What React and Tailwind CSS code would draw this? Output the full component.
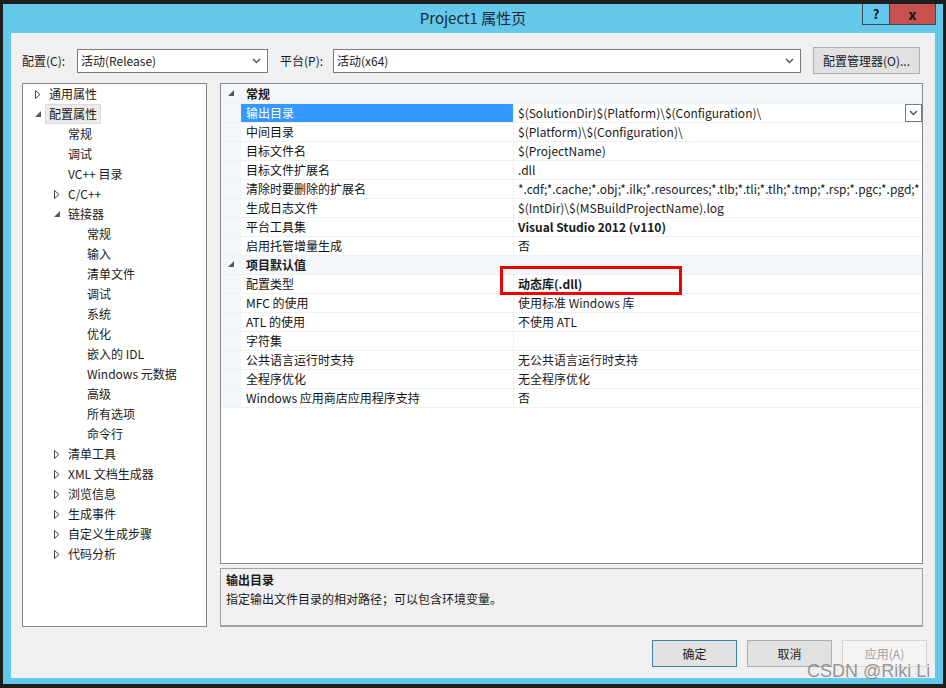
import React from "react";

const Chevron = () => (
  <svg width="9" height="6" viewBox="0 0 9 6">
    <path d="M1 1 L4.5 4.5 L8 1" fill="none" stroke="#555" strokeWidth="1.5" />
  </svg>
);

const Collapsed = () => (
  <svg width="6" height="9" viewBox="0 0 6 9">
    <path d="M0.5 0.5 L5 4.5 L0.5 8.5 Z" fill="none" stroke="#444" />
  </svg>
);

const Expanded = () => (
  <svg width="6" height="6" viewBox="0 0 6 6">
    <path d="M6 0 L6 6 L0 6 Z" fill="#595959" />
  </svg>
);

const indent = {
  0: "pl-[12px]",
  1: "pl-[31px]",
  2: "pl-[50px]",
};

const tree = [
  { label: "通用属性", level: 0, state: "c" },
  { label: "配置属性", level: 0, state: "e", selected: true },
  { label: "常规", level: 1 },
  { label: "调试", level: 1 },
  { label: "VC++ 目录", level: 1 },
  { label: "C/C++", level: 1, state: "c" },
  { label: "链接器", level: 1, state: "e" },
  { label: "常规", level: 2 },
  { label: "输入", level: 2 },
  { label: "清单文件", level: 2 },
  { label: "调试", level: 2 },
  { label: "系统", level: 2 },
  { label: "优化", level: 2 },
  { label: "嵌入的 IDL", level: 2 },
  { label: "Windows 元数据", level: 2 },
  { label: "高级", level: 2 },
  { label: "所有选项", level: 2 },
  { label: "命令行", level: 2 },
  { label: "清单工具", level: 1, state: "c" },
  { label: "XML 文档生成器", level: 1, state: "c" },
  { label: "浏览信息", level: 1, state: "c" },
  { label: "生成事件", level: 1, state: "c" },
  { label: "自定义生成步骤", level: 1, state: "c" },
  { label: "代码分析", level: 1, state: "c" },
];

const props = [
  { cat: "常规" },
  { name: "输出目录", value: "$(SolutionDir)$(Platform)\\$(Configuration)\\", selected: true },
  { name: "中间目录", value: "$(Platform)\\$(Configuration)\\" },
  { name: "目标文件名", value: "$(ProjectName)" },
  { name: "目标文件扩展名", value: ".dll" },
  {
    name: "清除时要删除的扩展名",
    value: "*.cdf;*.cache;*.obj;*.ilk;*.resources;*.tlb;*.tli;*.tlh;*.tmp;*.rsp;*.pgc;*.pgd;*",
  },
  { name: "生成日志文件", value: "$(IntDir)\\$(MSBuildProjectName).log" },
  { name: "平台工具集", value: "Visual Studio 2012 (v110)", bold: true },
  { name: "启用托管增量生成", value: "否" },
  { cat: "项目默认值" },
  { name: "配置类型", value: "动态库(.dll)", bold: true },
  { name: "MFC 的使用", value: "使用标准 Windows 库" },
  { name: "ATL 的使用", value: "不使用 ATL" },
  { name: "字符集", value: "" },
  { name: "公共语言运行时支持", value: "无公共语言运行时支持" },
  { name: "全程序优化", value: "无全程序优化" },
  { name: "Windows 应用商店应用程序支持", value: "否" },
];

const App = () => {
  return (
    <div className="relative w-[946px] h-[688px] overflow-hidden bg-[#1e1e1e] font-['Noto_Sans_CJK_SC','Noto_Sans',sans-serif] text-[12px] text-[#1a1a1a]">
      {/* dialog window */}
      <div className="ml-[3px] mt-[4px] w-[940px] h-[680px] bg-[#64c8ea] flex flex-col px-[8px] pb-[6px]">
        {/* title bar */}
        <div className="relative h-[29px] flex items-center justify-center">
          <span className="text-[15px] text-[#1c2a33]">Project1 属性页</span>
          <div className="absolute top-0 right-[-1px] flex">
            <div className="w-[28px] h-[21px] border border-t-0 border-[#3a4a52] flex items-center justify-center font-bold text-[13px] text-[#111]">
              ?
            </div>
            <div className="w-[46px] h-[21px] border border-l-0 border-t-0 border-[#3a4a52] bg-[#c75050] flex items-center justify-center font-bold text-[14px] text-[#111]">
              x
            </div>
          </div>
        </div>

        {/* client area */}
        <div className="flex-1 bg-[#f0f0f0] flex flex-col pl-[11px] pr-[8px] pt-[14px]">
          {/* config row */}
          <div className="flex items-center h-[27px]">
            <span className="w-[55px]">配置(C):</span>
            <div className="w-[191px] h-[24px] bg-white border border-[#7a7a7a] flex items-center justify-between pl-[3px] pr-[6px]">
              <span>活动(Release)</span>
              <Chevron />
            </div>
            <span className="ml-[12px] w-[53px]">平台(P):</span>
            <div className="w-[468px] h-[24px] bg-white border border-[#7a7a7a] flex items-center justify-between pl-[3px] pr-[6px]">
              <span>活动(x64)</span>
              <Chevron />
            </div>
            <div className="ml-[12px] w-[107px] h-[27px] bg-[#e1e1e1] border border-[#adadad] flex items-center justify-center">
              配置管理器(O)...
            </div>
          </div>

          {/* panels */}
          <div className="mt-[9px] flex h-[544px]">
            {/* tree */}
            <div className="w-[185px] h-full bg-white border border-[#828790]">
              {tree.map((t, i) => (
                <div key={i} className={`flex items-center h-[20px] ${indent[t.level]}`}>
                  <div className="w-[14px] flex items-center">
                    {t.state === "c" && <Collapsed />}
                    {t.state === "e" && <Expanded />}
                  </div>
                  {t.selected ? (
                    <span className="-ml-[4px] px-[3px] leading-[18px] bg-[#ececec] border border-[#dadada]">{t.label}</span>
                  ) : (
                    <span className="whitespace-nowrap">{t.label}</span>
                  )}
                </div>
              ))}
            </div>

            {/* right column */}
            <div className="ml-[13px] w-[703px] flex flex-col">
              <div className="relative h-[481px] bg-white border border-[#828790] pt-px overflow-hidden">
                {props.map((p, i) =>
                  p.cat ? (
                    <div key={i} className="flex items-center h-[19px] bg-[#f3f6fa] border-b border-[#f0f0f0]">
                      <div className="w-[20px] flex items-center justify-center pb-[3px]">
                        <Expanded />
                      </div>
                      <span className="pl-[5px] font-bold">{p.cat}</span>
                    </div>
                  ) : (
                    <div key={i} className="flex h-[19px] border-b border-[#f0f0f0]">
                      <div className="w-[20px] bg-[#f3f6fa]" />
                      <div
                        className={`w-[273px] pl-[5px] flex items-center whitespace-nowrap border-r border-[#f0f0f0] ${
                          p.selected ? "bg-[#3399ff] text-white" : "text-[#111]"
                        }`}
                      >
                        {p.name}
                      </div>
                      <div className="flex-1 min-w-0 pl-[4px] flex items-center justify-between overflow-hidden">
                        <span className={`whitespace-nowrap ${p.bold ? "font-bold" : ""}`}>{p.value}</span>
                        {p.selected && (
                          <div className="shrink-0 w-[17px] h-[18px] bg-white border border-[#7a7a7a] flex items-center justify-center">
                            <Chevron />
                          </div>
                        )}
                      </div>
                    </div>
                  )
                )}
                {/* annotation box */}
                <div className="absolute left-[279px] top-[182px] w-[182px] h-[29px] border-[3px] border-[#f00000]" />
              </div>

              <div className="mt-[4px] h-[59px] bg-[#f0f0f0] border border-[#a0a0a0] border-b-2 pl-[5px] pt-px leading-[19px]">
                <div className="font-bold">输出目录</div>
                <div>指定输出文件目录的相对路径；可以包含环境变量。</div>
              </div>
            </div>
          </div>

          {/* buttons */}
          <div className="mt-[13px] flex justify-end gap-[10px]">
            <div className="w-[85px] h-[27px] bg-[#e1e1e1] border border-[#3c7fb1] flex items-center justify-center">确定</div>
            <div className="w-[85px] h-[27px] bg-[#e1e1e1] border border-[#adadad] flex items-center justify-center">取消</div>
            <div className="w-[85px] h-[27px] bg-[#f4f4f4] border border-[#d5d5d5] flex items-center justify-center text-[#a0a0a0]">
              应用(A)
            </div>
          </div>
        </div>
      </div>

      {/* watermark */}
      <div className="absolute left-[807px] top-[658px] text-[18px] text-[#7d7d7d]/80 font-['Liberation_Sans',sans-serif]">
        CSDN @Riki Li
      </div>
    </div>
  );
};

export default App;
